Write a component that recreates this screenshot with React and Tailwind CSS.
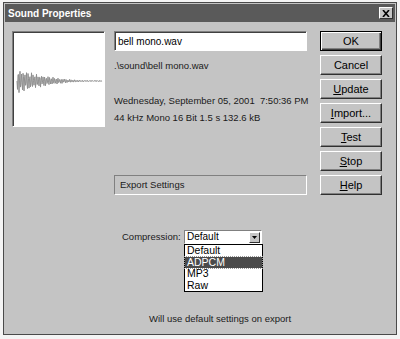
import React from 'react';

const buttons = [
  { label: 'OK', key: null, primary: true },
  { label: 'Cancel', key: null },
  { label: 'pdate', key: 'U' },
  { label: 'mport...', key: 'I' },
  { label: 'est', key: 'T' },
  { label: 'top', key: 'S' },
  { label: 'elp', key: 'H' },
];

// decaying wave, drawn as a polyline
const wavePoints = (() => {
  const pts = [];
  for (let i = 0; i <= 170; i++) {
    const x = 4 + i * 0.5;
    const decay = Math.max(0, 1 - i / 150);
    const amp = 12 * decay * decay + 0.6;
    const y = 49 + Math.sin(i * 1.9) * amp * (0.55 + 0.45 * Math.abs(Math.sin(i * 0.37)));
    pts.push(`${x.toFixed(1)},${y.toFixed(1)}`);
  }
  return pts.join(' ');
})();

const DialogButton = ({ label, hotkey, primary }) => (
  <button
    className={`h-[20px] w-[62px] text-[11px] text-black bg-[#c4c4c4] border ${
      primary
        ? 'border-black shadow-[inset_1px_1px_#ffffff,inset_-1px_-1px_#404040,inset_-2px_-2px_#808080]'
        : 'border-t-white border-l-white border-b-[#303030] border-r-[#303030] shadow-[inset_-1px_-1px_#808080]'
    }`}
  >
    {hotkey && <span className="underline">{hotkey}</span>}
    {label}
  </button>
);

export default function App() {
  return (
    <div className="w-[400px] h-[339px] bg-[#f4f4f4] pt-[2px] pl-[3px] font-['Liberation_Sans',Arial,sans-serif]">
      <div className="w-[394px] h-[333px] bg-[#c4c4c4] border border-[#4a4a4a] p-[1px] flex flex-col">
        {/* Title bar */}
        <div className="h-[18px] bg-[#5a5a5a] flex items-center justify-between pl-[3px] pr-[2px]">
          <span className="text-white font-bold text-[10px]">Sound Properties</span>
          <div className="w-[14px] h-[12px] bg-[#c4c4c4] border border-t-white border-l-white border-b-[#303030] border-r-[#303030] flex items-center justify-center">
            <svg width="8" height="7" viewBox="0 0 8 7">
              <path d="M1 0 L7 7 M7 0 L1 7" stroke="#000" strokeWidth="1.6" />
            </svg>
          </div>
        </div>

        {/* Body */}
        <div className="flex flex-1 pt-[9px] pl-[7px] pr-[11px]">
          {/* Waveform preview */}
          <div className="w-[93px] h-[96px] bg-white border border-t-[#808080] border-l-[#808080] border-b-white border-r-white shadow-[inset_1px_1px_#404040]">
            <svg width="91" height="94" viewBox="0 0 91 94">
              <polyline points={wavePoints} fill="none" stroke="#8f8f8f" strokeWidth="1" />
            </svg>
          </div>

          {/* Info column */}
          <div className="relative w-[193px] ml-[9px] flex flex-col text-[9.5px] text-[#1a1a1a]">
            <div className="h-[20px] bg-white border border-t-[#808080] border-l-[#808080] border-b-white border-r-white shadow-[inset_1px_1px_#404040] flex items-center pl-[3px] text-[10px] text-black">
              bell mono.wav
            </div>
            <div className="mt-[9px] leading-[12px]">.\sound\bell mono.wav</div>
            <div className="mt-[23px] leading-[12px] whitespace-pre">Wednesday, September 05, 2001  7:50:36 PM</div>
            <div className="mt-[5px] leading-[12px]">44 kHz Mono 16 Bit 1.5 s 132.6 kB</div>

            <div className="mt-[51px] h-[20px] border border-t-[#808080] border-l-[#808080] border-b-white border-r-white flex items-center pl-[5px]">
              Export Settings
            </div>

            <div className="mt-[35px] flex items-center">
              <span className="ml-[8px] w-[62px]">Compression:</span>
              <div className="relative">
                <div className="w-[78px] h-[14px] bg-white border border-t-[#808080] border-l-[#808080] border-b-white border-r-white flex items-center justify-between pl-[2px] pr-[1px]">
                  <span className="text-[10px] text-black leading-none">Default</span>
                  <div className="w-[11px] h-[11px] bg-[#c4c4c4] border border-t-white border-l-white border-b-[#303030] border-r-[#303030] flex items-center justify-center">
                    <svg width="5" height="3" viewBox="0 0 5 3">
                      <path d="M0 0 H5 L2.5 3 Z" fill="#000" />
                    </svg>
                  </div>
                </div>
                <ul className="absolute left-0 top-[14px] w-[79px] bg-white border border-black text-[10.5px] text-black leading-[11.5px] z-10">
                  <li className="pl-[2px]">Default</li>
                  <li className="pl-[2px] bg-[#4a4a4a] text-white outline outline-1 outline-dotted outline-[#999]">ADPCM</li>
                  <li className="pl-[2px]">MP3</li>
                  <li className="pl-[2px]">Raw</li>
                </ul>
              </div>
            </div>

            <div className="mt-auto mb-[8px] pl-[35px] leading-[12px]">Will use default settings on export</div>
          </div>

          {/* Buttons */}
          <div className="ml-[13px] flex flex-col gap-[4px]">
            {buttons.map((b) => (
              <DialogButton key={b.label} label={b.label} hotkey={b.key} primary={b.primary} />
            ))}
          </div>
        </div>
      </div>
    </div>
  );
}
